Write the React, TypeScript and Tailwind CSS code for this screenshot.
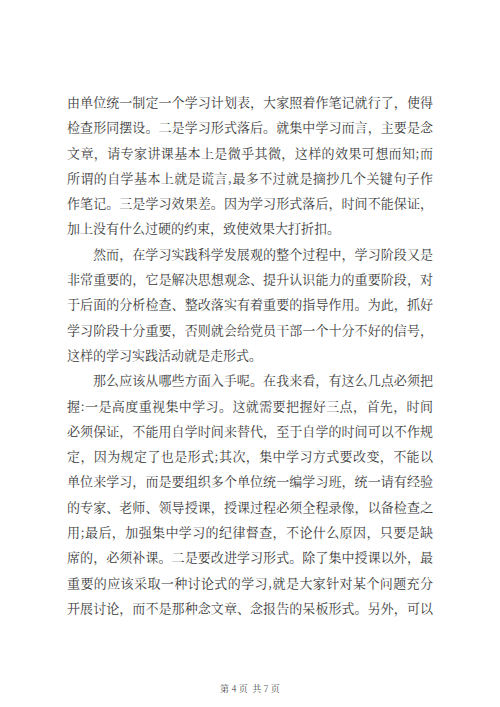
const paragraphs: { indent: boolean; lines: string[] }[] = [
  {
    indent: false,
    lines: [
      "由单位统一制定一个学习计划表，大家照着作笔记就行了，使得",
      "检查形同摆设。二是学习形式落后。就集中学习而言，主要是念",
      "文章，请专家讲课基本上是微乎其微，这样的效果可想而知;而",
      "所谓的自学基本上就是谎言,最多不过就是摘抄几个关键句子作",
      "作笔记。三是学习效果差。因为学习形式落后，时间不能保证，",
      "加上没有什么过硬的约束，致使效果大打折扣。",
    ],
  },
  {
    indent: true,
    lines: [
      "然而，在学习实践科学发展观的整个过程中，学习阶段又是",
      "非常重要的，它是解决思想观念、提升认识能力的重要阶段，对",
      "于后面的分析检查、整改落实有着重要的指导作用。为此，抓好",
      "学习阶段十分重要，否则就会给党员干部一个十分不好的信号，",
      "这样的学习实践活动就是走形式。",
    ],
  },
  {
    indent: true,
    lines: [
      "那么应该从哪些方面入手呢。在我来看，有这么几点必须把",
      "握:一是高度重视集中学习。这就需要把握好三点，首先，时间",
      "必须保证，不能用自学时间来替代，至于自学的时间可以不作规",
      "定，因为规定了也是形式;其次，集中学习方式要改变，不能以",
      "单位来学习，而是要组织多个单位统一编学习班，统一请有经验",
      "的专家、老师、领导授课，授课过程必须全程录像，以备检查之",
      "用;最后，加强集中学习的纪律督查，不论什么原因，只要是缺",
      "席的，必须补课。二是要改进学习形式。除了集中授课以外，最",
      "重要的应该采取一种讨论式的学习,就是大家针对某个问题充分",
      "开展讨论，而不是那种念文章、念报告的呆板形式。另外，可以",
    ],
  },
]

export default function App() {
  return (
    <div className="flex h-[707px] w-[500px] flex-col bg-white font-['Noto_Serif_CJK_SC','Noto_Sans_CJK_SC',serif] text-[#3a3a3a]">
      <div className="px-[67px] pt-[89px] text-[13px] leading-[25.3px]">
        {paragraphs.map((p, pi) =>
          p.lines.map((line, li) => {
            const last = pi < paragraphs.length - 1 && li === p.lines.length - 1
            return (
              <div
                key={`${pi}-${li}`}
                className={`whitespace-nowrap ${li === 0 && p.indent ? "pl-[26px]" : ""} ${
                  last ? "text-left" : "text-justify [text-align-last:justify]"
                }`}
              >
                {line}
              </div>
            )
          })
        )}
      </div>
      <div className="mt-[63px] text-center text-[9px] leading-[12px] text-[#444]">第 4 页&nbsp; 共 7 页</div>
    </div>
  )
}
